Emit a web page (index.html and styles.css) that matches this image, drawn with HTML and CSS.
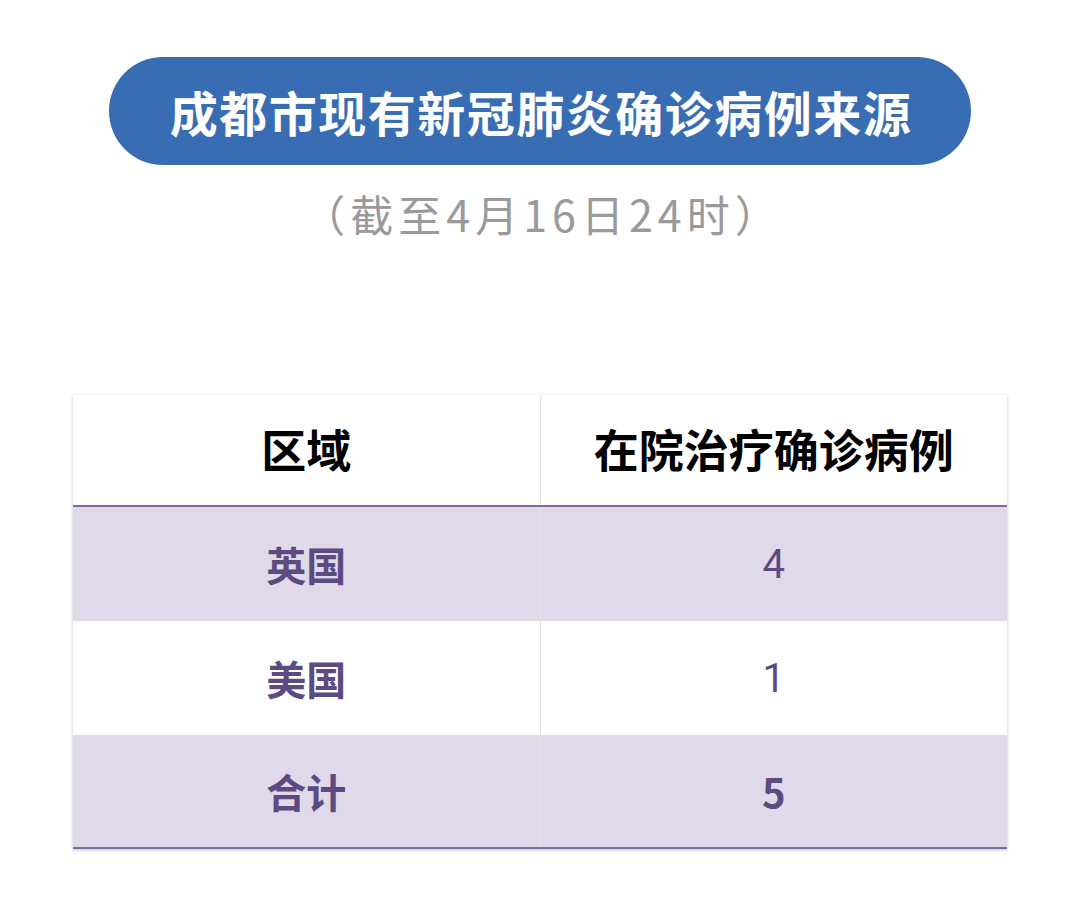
FILE: index.html
```html
<!DOCTYPE html>
<html lang="zh-CN">
<head>
<meta charset="utf-8">
<link rel="stylesheet" href="styles.css">
</head>
<body>
<div class="page">
  <div class="banner">成都市现有新冠肺炎确诊病例来源</div>
  <div class="subtitle">（截至4月16日24时）</div>
  <table class="data">
    <thead>
      <tr><th>区域</th><th>在院治疗确诊病例</th></tr>
    </thead>
    <tbody>
      <tr class="alt"><td class="region">英国</td><td class="num">4</td></tr>
      <tr><td class="region">美国</td><td class="num">1</td></tr>
      <tr class="alt total"><td class="region">合计</td><td class="num">5</td></tr>
    </tbody>
  </table>
</div>
</body>
</html>
```

FILE: styles.css
```css
html, body {
  margin: 0;
  padding: 0;
  background: #ffffff;
}
body {
  font-family: "Noto Sans CJK SC", "Noto Sans", sans-serif;
}
.page {
  width: 1080px;
  height: 899px;
  display: flex;
  flex-direction: column;
  align-items: center;
  padding-top: 57px;
  box-sizing: border-box;
}
.banner {
  width: 862px;
  height: 108px;
  border-radius: 54px;
  background: #386db3;
  color: #ffffff;
  font-weight: 700;
  font-size: 48px;
  letter-spacing: 1.5px;
  display: flex;
  align-items: center;
  justify-content: center;
  box-sizing: border-box;
  padding-left: 2px;
}
.subtitle {
  margin-top: 20px;
  color: #9a9a9a;
  font-size: 43px;
  letter-spacing: 5px;
  line-height: 56px;
  padding-left: 5px;
  font-family: "Noto Sans CJK SC", sans-serif;
}
.data {
  margin-top: 154px;
  width: 934px;
  border-collapse: collapse;
  table-layout: fixed;
  box-shadow: 0 1px 3px rgba(0,0,0,0.25);
}
.data th, .data td {
  width: 50%;
  text-align: center;
  padding: 0;
  border-left: 1px solid #e2e2e6;
}
.data th:first-child, .data td:first-child {
  border-left: none;
}
.data th {
  height: 106px;
  padding-bottom: 4px;
  font-size: 45px;
  font-weight: 700;
  color: #000000;
  background: #ffffff;
  border-bottom: 2px solid #7e6c9c;
}
.data td {
  height: 114px;
  font-size: 40px;
  color: #5c4a80;
}
.data tr.alt td {
  background: #dfd9e9;
}
.data td.region {
  font-weight: 700;
}
.data td.num {
  font-family: "Roboto", "Noto Sans", sans-serif;
  font-weight: 400;
  font-size: 40px;
}
.data tr.total td {
  border-bottom: 2px solid #7e6c9c;
  height: 112px;
}
.data tr.total td.num {
  font-weight: 700;
  font-family: "Noto Sans CJK SC", sans-serif;
}
```
